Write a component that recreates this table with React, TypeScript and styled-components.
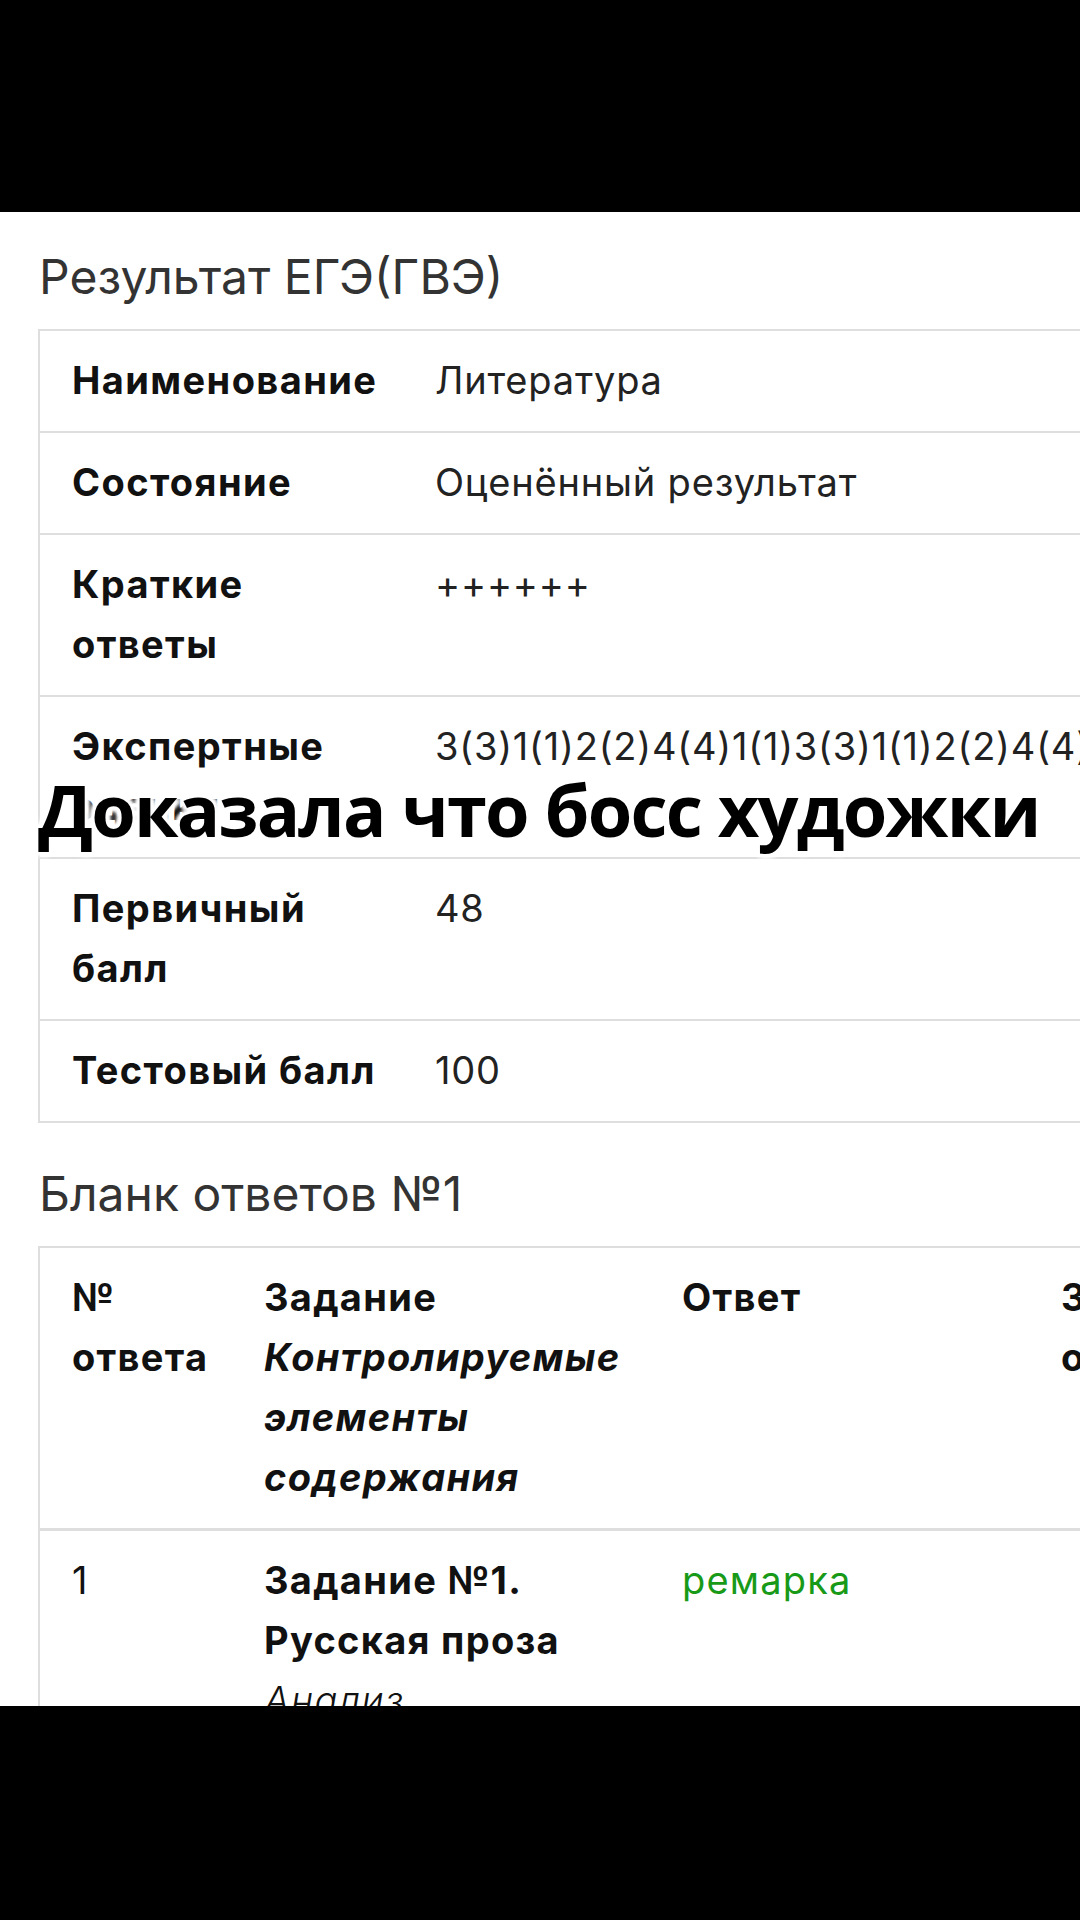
import React from "react";
import styled, { createGlobalStyle } from "styled-components";

const Global = createGlobalStyle`
  html, body {
    margin: 0;
    padding: 0;
    background: #000;
  }
  body {
    width: 1080px;
    height: 1920px;
    overflow: hidden;
    font-family: Inter, "Noto Sans", "Liberation Sans", sans-serif;
  }
`;

const Screen = styled.div`
  position: relative;
  width: 1080px;
  height: 1920px;
  display: flex;
  flex-direction: column;
  background: #000;
  overflow: hidden;
`;

const TopBand = styled.div`
  flex: none;
  height: 212px;
  background: #000;
`;

const Sheet = styled.main`
  flex: none;
  height: 1494px;
  background: #fff;
  overflow: hidden;
  padding-left: 38px;
  box-sizing: border-box;
  display: flex;
  flex-direction: column;
`;

const SectionTitle = styled.h2<{ $top: number }>`
  margin: ${(p) => p.$top}px 0 24px 1px;
  font-family: Inter, "Noto Sans", sans-serif;
  font-weight: 400;
  font-size: 48px;
  line-height: 56px;
  color: #333;
  white-space: nowrap;
`;

const Table = styled.table<{ $w: number }>`
  flex: none;
  width: ${(p) => p.$w}px;
  table-layout: fixed;
  border-collapse: collapse;
  border: 2px solid #dedede;
`;

const Col = styled.col<{ $w?: number }>`
  width: ${(p) => (p.$w ? `${p.$w}px` : "auto")};
`;

const Row = styled.tr``;

const cell = `
  padding: 19px 28px 21px 32px;
  font-size: 38px;
  line-height: 60px;
  vertical-align: top;
  text-align: left;
  border-top: 2px solid #dedede;
  white-space: nowrap;
  overflow: visible;
`;

const Label = styled.th`
  ${cell}
  font-weight: 700;
  letter-spacing: 1.4px;
  color: #111;
`;

const Value = styled.td`
  ${cell}
  font-weight: 400;
  letter-spacing: 0.8px;
  color: #222;
`;

const HeadCell = styled.th`
  ${cell}
  font-weight: 700;
  letter-spacing: 1.3px;
  color: #111;
  border-bottom: 3px solid #dedede;
`;

const Italic = styled.span<{ $bold?: boolean }>`
  font-style: italic;
  font-weight: ${(p) => (p.$bold ? 700 : 300)};
`;

const BodyCell = styled.td<{ $bold?: boolean; $green?: boolean }>`
  ${cell}
  font-weight: ${(p) => (p.$bold ? 700 : 400)};
  letter-spacing: ${(p) => (p.$bold ? "1.3px" : "1.2px")};
  color: ${(p) => (p.$green ? "#189a18" : "#111")};
`;

const Caption = styled.div`
  position: absolute;
  left: 38px;
  top: 773px;
  font-family: "Open Sans", "Noto Sans", sans-serif;
  font-weight: 700;
  font-size: 72px;
  line-height: 72px;
  letter-spacing: -1.8px;
  color: #000;
  white-space: nowrap;
  text-shadow:
    0 0 4px rgba(255, 255, 255, 0.95),
    3px 3px 3px rgba(255, 255, 255, 0.9),
    -3px -3px 3px rgba(255, 255, 255, 0.9),
    3px -3px 3px rgba(255, 255, 255, 0.9),
    -3px 3px 3px rgba(255, 255, 255, 0.9),
    0 5px 4px rgba(255, 255, 255, 0.9),
    0 -5px 4px rgba(255, 255, 255, 0.9),
    5px 0 4px rgba(255, 255, 255, 0.9),
    -5px 0 4px rgba(255, 255, 255, 0.9);
`;

const results: { label: React.ReactNode; value: string }[] = [
  { label: "Наименование", value: "Литература" },
  { label: "Состояние", value: "Оценённый результат" },
  { label: <>Краткие<br />ответы</>, value: "++++++" },
  {
    label: <>Экспертные<br />оценки</>,
    value: "3(3)1(1)2(2)4(4)1(1)3(3)1(1)2(2)4(4)1(1)3(3)1(1)",
  },
  { label: <>Первичный<br />балл</>, value: "48" },
  { label: "Тестовый балл", value: "100" },
];

export default function App() {
  return (
    <>
      <Global />
      <Screen>
        <TopBand />
        <Sheet>
          <SectionTitle $top={37}>Результат ЕГЭ(ГВЭ)</SectionTitle>
          <Table $w={1400}>
            <colgroup>
              <Col $w={364} />
              <Col />
            </colgroup>
            <tbody>
              {results.map((r, i) => (
                <Row key={i}>
                  <Label>{r.label}</Label>
                  <Value>{r.value}</Value>
                </Row>
              ))}
            </tbody>
          </Table>

          <SectionTitle $top={43}>Бланк ответов №1</SectionTitle>
          <Table $w={1400}>
            <colgroup>
              <Col $w={193} />
              <Col $w={418} />
              <Col $w={379} />
              <Col />
            </colgroup>
            <thead>
              <Row>
                <HeadCell>
                  №<br />ответа
                </HeadCell>
                <HeadCell>
                  Задание
                  <br />
                  <Italic $bold>
                    Контролируемые
                    <br />
                    элементы
                    <br />
                    содержания
                  </Italic>
                </HeadCell>
                <HeadCell>Ответ</HeadCell>
                <HeadCell>
                  Замена
                  <br />
                  ответа
                </HeadCell>
              </Row>
            </thead>
            <tbody>
              <Row>
                <BodyCell>1</BodyCell>
                <BodyCell $bold>
                  Задание №1.
                  <br />
                  Русская проза
                  <br />
                  <Italic>Анализ</Italic>
                  <br />
                  <Italic>текста</Italic>
                </BodyCell>
                <BodyCell $green>ремарка</BodyCell>
                <BodyCell></BodyCell>
              </Row>
            </tbody>
          </Table>
        </Sheet>
        <Caption>Доказала что босс художки</Caption>
      </Screen>
    </>
  );
}
